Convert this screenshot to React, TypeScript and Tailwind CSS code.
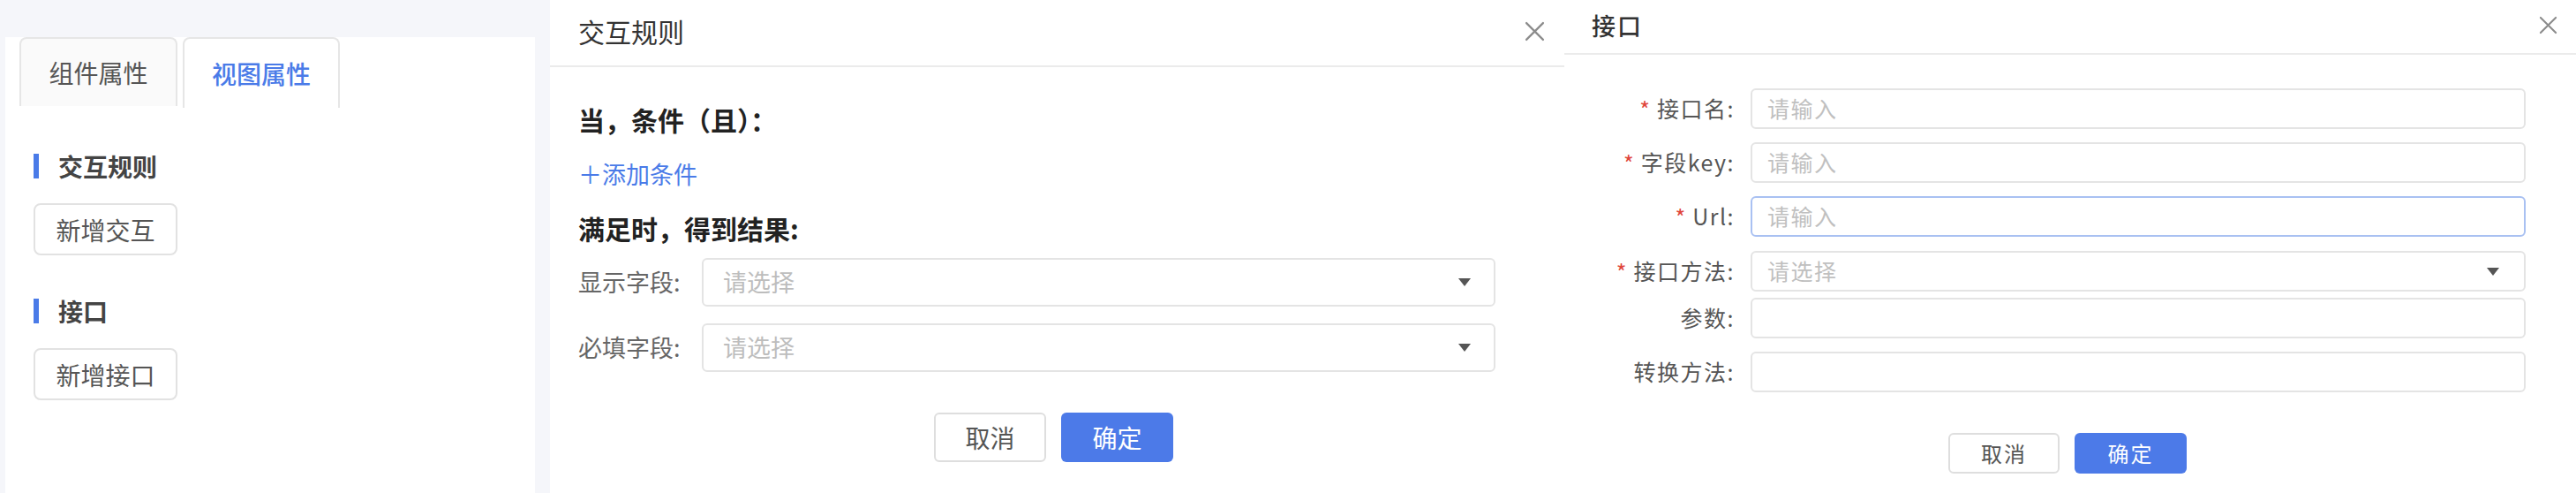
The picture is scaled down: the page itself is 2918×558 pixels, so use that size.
import React from 'react';

const BLUE = 'bg-[#4c7ae8]';

function CloseIcon({ size }: { size: number }) {
  return (
    <svg width={size} height={size} viewBox="0 0 22 22" fill="none">
      <path d="M2 2 L20 20 M20 2 L2 20" stroke="#8c8c8c" strokeWidth="2.2" strokeLinecap="round" />
    </svg>
  );
}

function Caret() {
  return (
    <svg width="14" height="9" viewBox="0 0 14 9">
      <path d="M0 0 H14 L7 9 Z" fill="#555" />
    </svg>
  );
}

function Section({ title, button, top }: { title: string; button: string; top: string }) {
  return (
    <div className={top}>
      <div className="flex h-[28px] items-center">
        <span className="h-[28px] w-[6px] bg-[#4a7be8]" />
        <span className="ml-[22px] text-[28px] font-bold leading-[28px] text-[#444]">{title}</span>
      </div>
      <button className="mt-[28px] flex h-[59px] w-[163px] items-center justify-center rounded-[8px] border-2 border-[#e2e2e2] bg-white text-[28px] text-[#555]">
        {button}
      </button>
    </div>
  );
}

function Sidebar() {
  return (
    <div className="ml-[6px] mt-[42px] h-[516px] w-[600px] shrink-0 bg-white">
      <div className="flex items-start gap-[6px] pl-[16px]">
        <div className="flex h-[78px] w-[179px] items-center justify-center rounded-t-[8px] border-2 border-b-0 border-[#e6e6e6] bg-[#fafafa] text-[28px] text-[#555]">
          组件属性
        </div>
        <div className="flex h-[80px] w-[178px] items-center justify-center rounded-t-[8px] border-2 border-b-0 border-[#e6e6e6] bg-white text-[28px] font-medium text-[#4a7be8]">
          视图属性
        </div>
      </div>
      <div className="pl-[32px]">
        <Section title="交互规则" button="新增交互" top="mt-[52px]" />
        <Section title="接口" button="新增接口" top="mt-[49px]" />
      </div>
    </div>
  );
}

function RuleSelect({ label, top }: { label: string; top: string }) {
  return (
    <div className={`flex items-center ${top}`}>
      <span className="w-[140px] text-[27px] text-[#666]">{label}</span>
      <div className="flex h-[55px] w-[899px] items-center justify-between rounded-[6px] border-2 border-[#e4e4e4] pl-[22px] pr-[26px]">
        <span className="text-[27px] text-[#bdbdbd]">请选择</span>
        <Caret />
      </div>
    </div>
  );
}

function RuleDialog() {
  return (
    <div className="ml-[17px] h-[558px] w-[1149px] shrink-0 bg-white">
      <div className="flex h-[76px] items-center justify-between border-b-2 border-[#ebebeb] pb-[4px] pl-[32px] pr-[22px]">
        <span className="text-[30px] leading-[30px] text-[#333]">交互规则</span>
        <CloseIcon size={23} />
      </div>
      <div className="pl-[32px]">
        <div className="mt-[44px] h-[30px] text-[30px] font-bold leading-[30px] text-[#222]">当，条件（且）：</div>
        <div className="mt-[33px] h-[28px] text-[27px] leading-[28px] text-[#4a7be8]">＋添加条件</div>
        <div className="mt-[32px] h-[30px] text-[30px] font-bold leading-[30px] text-[#222]">满足时，得到结果:</div>
        <RuleSelect label="显示字段:" top="mt-[19px]" />
        <RuleSelect label="必填字段:" top="mt-[19px]" />
      </div>
      <div className="mt-[46px] flex justify-center gap-[17px] pr-[8px]">
        <button className="flex h-[56px] w-[127px] items-center justify-center rounded-[6px] border-2 border-[#dedede] bg-white text-[28px] text-[#555]">
          取消
        </button>
        <button className={`flex h-[56px] w-[127px] items-center justify-center rounded-[6px] ${BLUE} text-[28px] text-white`}>
          确定
        </button>
      </div>
    </div>
  );
}

type Field = { label: string; required?: boolean; placeholder?: string; select?: boolean; focused?: boolean; top: string };

const fields: Field[] = [
  { label: '接口名:', required: true, placeholder: '请输入', top: 'mt-[38px]' },
  { label: '字段key:', required: true, placeholder: '请输入', top: 'mt-[15px]' },
  { label: 'Url:', required: true, placeholder: '请输入', focused: true, top: 'mt-[15px]' },
  { label: '接口方法:', required: true, placeholder: '请选择', select: true, top: 'mt-[16px]' },
  { label: '参数:', top: 'mt-[7px]' },
  { label: '转换方法:', top: 'mt-[15px]' },
];

function ApiDialog() {
  return (
    <div className="h-[558px] w-[1146px] shrink-0 bg-white">
      <div className="flex h-[62px] items-center justify-between border-b-2 border-[#ebebeb] pb-[4px] pl-[31px] pr-[21px]">
        <span className="text-[27px] font-medium leading-[27px] tracking-[2px] text-[#333]">接口</span>
        <CloseIcon size={21} />
      </div>
      {fields.map((f) => (
        <div key={f.label} className={`flex items-center ${f.top}`}>
          <div className="flex w-[193px] items-center justify-end">
            {f.required && <span className="mr-[8px] text-[25px] leading-[25px] text-[#e0463b]">*</span>}
            <span className="text-[25px] tracking-[1.5px] text-[#555]">{f.label}</span>
          </div>
          <div
            className={`ml-[18px] flex h-[46px] w-[878px] items-center justify-between rounded-[6px] border-2 pl-[17px] pr-[28px] ${
              f.focused ? 'border-[#a9c1f2]' : 'border-[#e4e4e4]'
            }`}
          >
            <span className="text-[25px] tracking-[1.5px] text-[#c0c0c0]">{f.placeholder}</span>
            {f.select && <Caret />}
          </div>
        </div>
      ))}
      <div className="mt-[46px] flex justify-center gap-[17px] pr-[6px]">
        <button className="flex h-[46px] w-[126px] items-center justify-center rounded-[6px] border-2 border-[#dedede] bg-white text-[24px] tracking-[2px] text-[#555]">
          取消
        </button>
        <button className={`flex h-[46px] w-[127px] items-center justify-center rounded-[6px] ${BLUE} text-[24px] tracking-[2px] text-white`}>
          确定
        </button>
      </div>
    </div>
  );
}

export default function App() {
  return (
    <div className="flex h-[558px] w-[2918px] overflow-hidden bg-[#f5f6fa] font-['Noto_Sans_CJK_SC','Noto_Sans',sans-serif]">
      <Sidebar />
      <RuleDialog />
      <ApiDialog />
    </div>
  );
}
